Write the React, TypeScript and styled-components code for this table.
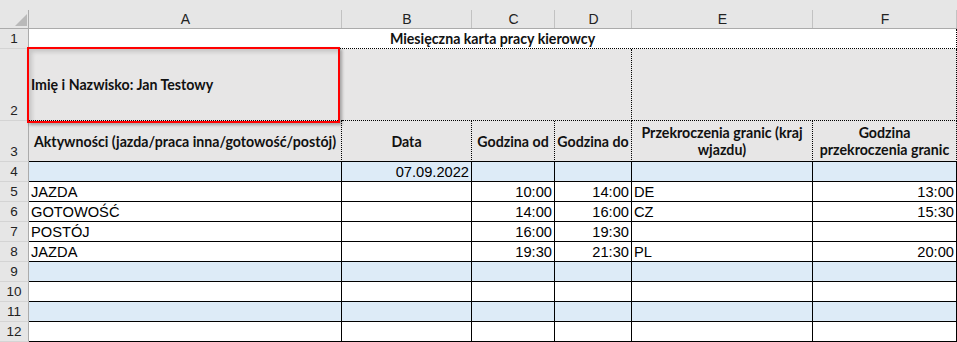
import React from "react";
import styled, { createGlobalStyle, css } from "styled-components";

const GlobalStyle = createGlobalStyle`
  html, body { margin: 0; padding: 0; background: #ffffff; }
  body { overflow: hidden; }
  * { box-sizing: border-box; }
`;

const HEADER_BG = "#e6e6e6";
const HEADER_EDGE = "#ababab";
const HEADER_SEP = "#c2c2c2";
const ROW_SEP = "#d4d4d4";
const BAND = "#ddebf7";
const GREY = "#e7e6e6";

type Line = "solid" | "dotted" | "none";
type Align = "left" | "right" | "center";

const Sheet = styled.div`
  position: relative;
  display: grid;
  grid-template-columns: 29px 313px 130px 83px 77px 181px 144px;
  grid-template-rows: 29px 20px 72px 41px repeat(9, 20px);
  width: 957px;
  font-family: "Liberation Sans", Arial, sans-serif;
  font-size: 14.67px;
  color: #000;
`;

const Corner = styled.div`
  background: linear-gradient(${HEADER_EDGE}, ${HEADER_EDGE}) right 10px / 1px calc(100% - 10px) no-repeat,
    ${HEADER_BG};
  border-bottom: 1px solid ${HEADER_EDGE};
  display: flex;
  align-items: flex-end;
  justify-content: flex-end;
  padding: 0 2px 2px 0;
`;

const ColHeader = styled.div`
  background: linear-gradient(${HEADER_SEP}, ${HEADER_SEP}) right 10px / 1px calc(100% - 10px) no-repeat,
    ${HEADER_BG};
  border-bottom: 1px solid ${HEADER_EDGE};
  padding-top: 10px;
  display: flex;
  align-items: center;
  justify-content: center;
  color: #222;
  font-size: 14px;
  line-height: 16px;
`;

const RowHeader = styled.div`
  background: ${HEADER_BG};
  border-right: 1px solid ${HEADER_EDGE};
  border-bottom: 1px solid ${ROW_SEP};
  display: flex;
  align-items: flex-end;
  justify-content: center;
  font-size: 13.5px;
  line-height: 18px;
  color: #222;
`;

const lineCss = (l: Line) =>
  l === "none" ? "none" : l === "dotted" ? "1px dotted #000" : "1px solid #000";

const Cell = styled.div<{
  $span?: number;
  $fill?: string;
  $right?: Line;
  $bottom?: Line;
  $align?: Align;
}>`
  grid-column: span ${(p) => p.$span ?? 1};
  background: ${(p) => p.$fill ?? "#ffffff"};
  border-right: ${(p) => lineCss(p.$right ?? "solid")};
  border-bottom: ${(p) => lineCss(p.$bottom ?? "solid")};
  display: flex;
  align-items: flex-end;
  justify-content: ${(p) =>
    p.$align === "right" ? "flex-end" : p.$align === "center" ? "center" : "flex-start"};
  padding: 0 2px;
  line-height: 17px;
  white-space: nowrap;
  overflow: hidden;
`;

const boldText = css`
  font-family: Lato, "Liberation Sans", sans-serif;
  font-weight: 700;
  font-size: 14.2px;
  color: #111;
`;

const TitleCell = styled(Cell)`
  ${boldText}
  line-height: 18px;
`;

const NameCell = styled(Cell)`
  ${boldText}
  align-items: center;
`;

const HeadCell = styled(Cell)`
  ${boldText}
  align-items: center;
  text-align: center;
  line-height: 17px;
  white-space: normal;
`;

const Callout = styled.div`
  position: absolute;
  left: 27px;
  top: 47px;
  width: 313px;
  height: 76px;
  border: 2px solid #ff0000;
  box-shadow: 2px 2px 3px rgba(0, 0, 0, 0.3), inset 3px 3px 4px rgba(0, 0, 0, 0.14);
  pointer-events: none;
`;

const columns = ["A", "B", "C", "D", "E", "F"];

type Entry = [string, string, string, string, string, string];

const rows: { n: number; band?: boolean; v: Entry }[] = [
  { n: 4, band: true, v: ["", "07.09.2022", "", "", "", ""] },
  { n: 5, v: ["JAZDA", "", "10:00", "14:00", "DE", "13:00"] },
  { n: 6, v: ["GOTOWOŚĆ", "", "14:00", "16:00", "CZ", "15:30"] },
  { n: 7, v: ["POSTÓJ", "", "16:00", "19:30", "", ""] },
  { n: 8, v: ["JAZDA", "", "19:30", "21:30", "PL", "20:00"] },
  { n: 9, band: true, v: ["", "", "", "", "", ""] },
  { n: 10, v: ["", "", "", "", "", ""] },
  { n: 11, band: true, v: ["", "", "", "", "", ""] },
  { n: 12, v: ["", "", "", "", "", ""] },
];

// text columns are left-aligned, numbers and dates sit on the right
const align: Align[] = ["left", "right", "right", "right", "left", "right"];

export default function App() {
  return (
    <>
      <GlobalStyle />
      <Sheet>
        <Corner>
          <svg width="12" height="12" viewBox="0 0 12 12">
            <polygon points="12,0 12,12 0,12" fill="#b9b9b9" />
          </svg>
        </Corner>
        {columns.map((c) => (
          <ColHeader key={c}>{c}</ColHeader>
        ))}

        <RowHeader>1</RowHeader>
        <TitleCell $span={6} $align="center" $right="dotted" $bottom="dotted">
          Miesięczna karta pracy kierowcy
        </TitleCell>

        <RowHeader>2</RowHeader>
        <NameCell $fill={GREY} $right="none" $bottom="dotted">
          Imię i Nazwisko: Jan Testowy
        </NameCell>
        <Cell $span={3} $fill={GREY} $right="dotted" $bottom="dotted" />
        <Cell $span={2} $fill={GREY} $right="dotted" $bottom="dotted" />

        <RowHeader>3</RowHeader>
        <HeadCell $fill={GREY} $right="dotted" $align="center">
          Aktywności (jazda/praca inna/gotowość/postój)
        </HeadCell>
        <HeadCell $fill={GREY} $right="dotted" $align="center">
          Data
        </HeadCell>
        <HeadCell $fill={GREY} $right="dotted" $align="center">
          Godzina od
        </HeadCell>
        <HeadCell $fill={GREY} $right="dotted" $align="center">
          Godzina do
        </HeadCell>
        <HeadCell $fill={GREY} $right="dotted" $align="center">
          Przekroczenia granic (kraj
          <br />
          wjazdu)
        </HeadCell>
        <HeadCell $fill={GREY} $right="dotted" $align="center">
          Godzina
          <br />
          przekroczenia granic
        </HeadCell>

        {rows.map((r) => (
          <React.Fragment key={r.n}>
            <RowHeader>{r.n}</RowHeader>
            {r.v.map((text, i) => (
              <Cell key={i} $fill={r.band ? BAND : undefined} $align={align[i]}>
                {text}
              </Cell>
            ))}
          </React.Fragment>
        ))}

        <Callout />
      </Sheet>
    </>
  );
}
